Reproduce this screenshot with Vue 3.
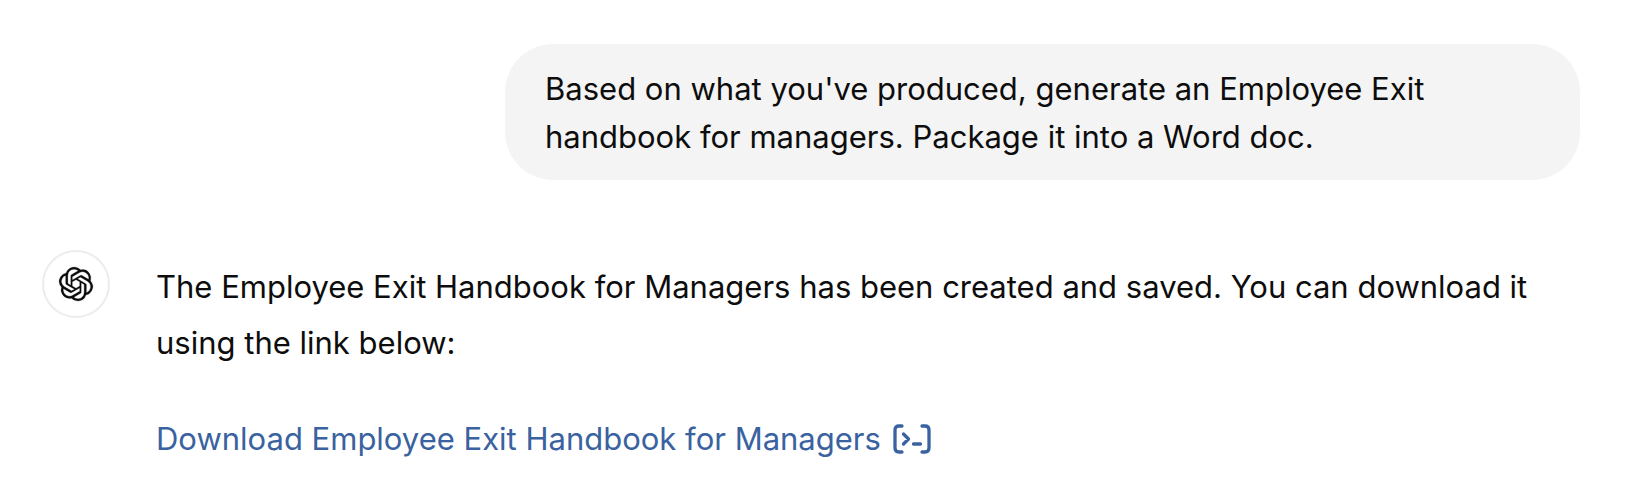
<script setup>
</script>

<template>
  <main class="chat">
    <div class="bubble">Based on what you've produced, generate an Employee Exit handbook for managers. Package it into a Word doc.</div>
    <section class="reply">
      <div class="avatar">
        <svg viewBox="0 0 24 24" width="34" height="34" fill="currentColor" stroke="currentColor" stroke-width="0.15" overflow="visible" aria-hidden="true">
          <path d="M22.2819 9.8211a5.9847 5.9847 0 0 0-.5157-4.9108 6.0462 6.0462 0 0 0-6.5098-2.9A6.0651 6.0651 0 0 0 4.9807 4.1818a5.9847 5.9847 0 0 0-3.9977 2.9 6.0462 6.0462 0 0 0 .7427 7.0966 5.98 5.98 0 0 0 .511 4.9107 6.051 6.051 0 0 0 6.5146 2.9001A5.9847 5.9847 0 0 0 13.2599 24a6.0557 6.0557 0 0 0 5.7718-4.2058 5.9894 5.9894 0 0 0 3.9977-2.9001 6.0557 6.0557 0 0 0-.7475-7.0729zm-9.022 12.6081a4.4755 4.4755 0 0 1-2.8764-1.0408l.1419-.0804 4.7783-2.7582a.7948.7948 0 0 0 .3927-.6813v-6.7369l2.02 1.1686a.071.071 0 0 1 .038.052v5.5826a4.504 4.504 0 0 1-4.4945 4.4944zm-9.6607-4.1254a4.4708 4.4708 0 0 1-.5346-3.0137l.142.0852 4.783 2.7582a.7712.7712 0 0 0 .7806 0l5.8428-3.3685v2.3324a.0804.0804 0 0 1-.0332.0615L9.74 19.9502a4.4992 4.4992 0 0 1-6.1408-1.6464zM2.3408 7.8956a4.485 4.485 0 0 1 2.3655-1.9728V11.6a.7664.7664 0 0 0 .3879.6765l5.8144 3.3543-2.0201 1.1685a.0757.0757 0 0 1-.071 0l-4.8303-2.7865A4.504 4.504 0 0 1 2.3408 7.872zm16.5963 3.8558L13.1038 8.364 15.1192 7.2a.0757.0757 0 0 1 .071 0l4.8303 2.7913a4.4944 4.4944 0 0 1-.6765 8.1042v-5.6772a.79.79 0 0 0-.407-.667zm2.0107-3.0231l-.142-.0852-4.7735-2.7818a.7759.7759 0 0 0-.7854 0L9.409 9.2297V6.8974a.0662.0662 0 0 1 .0284-.0615l4.8303-2.7866a4.4992 4.4992 0 0 1 6.6802 4.66zM8.3065 12.863l-2.02-1.1638a.0804.0804 0 0 1-.038-.0567V6.0742a4.4992 4.4992 0 0 1 7.3757-3.4537l-.142.0805L8.704 5.459a.7948.7948 0 0 0-.3927.6813zm1.0976-2.3654l2.602-1.4998 2.6069 1.4998v2.9994l-2.5974 1.4997-2.6067-1.4997Z" />
        </svg>
      </div>
      <div class="content">
        <p>The Employee Exit Handbook for Managers has been created and saved. You can download it using the link below:</p>
        <p class="download">
          <a href="#">Download Employee Exit Handbook for Managers</a>
          <button type="button" aria-label="View analysis">
            <svg viewBox="0 0 38 30" width="38" height="30" fill="none" stroke="currentColor" stroke-width="3.3" stroke-linecap="round" stroke-linejoin="round" aria-hidden="true">
              <path d="M9 2H6Q2 2 2 6V24Q2 28 6 28H9M29 2H32Q36 2 36 6V24Q36 28 32 28H29M10.5 10L15.5 15L10.5 20M20.5 20H27.5" />
            </svg>
          </button>
        </p>
      </div>
    </section>
  </main>
</template>

<style scoped>
.chat {
  box-sizing: border-box;
  padding: 44px 54px 0 42px;
  font-family: Inter, "Liberation Sans", sans-serif;
  font-size: 31px;
  color: #0d0d0d;
}
.bubble {
  box-sizing: border-box;
  width: 70%;
  max-width: 1075px;
  margin-left: auto;
  padding: 21px 40px 19px;
  border-radius: 48px;
  background: #f4f4f4;
  line-height: 48px;
}
.reply {
  display: flex;
  gap: 46px;
  margin-top: 70px;
}
.avatar {
  box-sizing: border-box;
  display: flex;
  flex: none;
  align-items: center;
  justify-content: center;
  width: 68px;
  height: 68px;
  border: 2px solid #ececec;
  border-radius: 50%;
}
.content {
  flex: 1;
  padding-top: 9px;
  line-height: 56px;
}
p {
  margin: 0;
}
.download {
  display: flex;
  align-items: center;
  gap: 12px;
  margin-top: 40px;
  color: #3a62a0;
}
a {
  color: inherit;
  text-decoration: none;
}
button {
  display: flex;
  padding: 0;
  border: 0;
  background: none;
  color: inherit;
}
</style>

<style>
body {
  background: #fff;
}
</style>
